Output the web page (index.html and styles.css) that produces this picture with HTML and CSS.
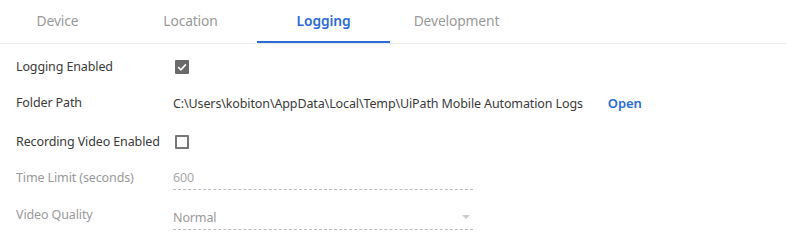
FILE: index.html
```html
<!DOCTYPE html>
<html>
<head>
<meta charset="utf-8">
<link rel="stylesheet" href="styles.css">
</head>
<body>
<div class="tabbar">
  <div class="tabs">
    <div class="tab">Device</div>
    <div class="tab">Location</div>
    <div class="tab active">Logging</div>
    <div class="tab">Development</div>
  </div>
</div>
<div class="form">
  <div class="row r1">
    <div class="label">Logging Enabled</div>
    <div class="value"><span class="cb checked"><svg viewBox="0 0 14 14" width="14" height="14"><path d="M3.2 7.2 L5.9 9.8 L10.9 4.4" fill="none" stroke="#fff" stroke-width="1.6"/></svg></span></div>
  </div>
  <div class="row r2">
    <div class="label">Folder Path</div>
    <div class="value path">C:\Users\kobiton\AppData\Local\Temp\UiPath Mobile Automation Logs <a class="open">Open</a></div>
  </div>
  <div class="row r3">
    <div class="label">Recording Video Enabled</div>
    <div class="value"><span class="cb"></span></div>
  </div>
  <div class="row r4 disabled">
    <div class="label">Time Limit (seconds)</div>
    <div class="value"><div class="field">600</div></div>
  </div>
  <div class="row r5 disabled">
    <div class="label">Video Quality</div>
    <div class="value"><div class="field select">Normal<span class="arrow"></span></div></div>
  </div>
</div>
</body>
</html>
```
FILE: styles.css
```css
html, body { margin: 0; padding: 0; background: #fff; }
body { font-family: "Noto Sans", "Open Sans", sans-serif; font-size: 12.5px; letter-spacing: -0.12px; color: #3a3a3a; width: 786px; height: 247px; overflow: hidden; }
.tabbar { border-bottom: 1px solid #ebebeb; height: 44px; box-sizing: border-box; }
.tabs { display: flex; margin-left: -9px; }
.tab { width: 133px; text-align: center; font-size: 13.8px; color: #999; height: 43px; line-height: 41px; box-sizing: border-box; }
.tab.active { color: #2b6bd4; font-weight: 600; border-bottom: 2px solid #2b6bd4; }
.form { padding-left: 16px; }
.row { display: flex; align-items: center; }
.label { width: 157px; flex: none; line-height: 18px; }
.value { display: flex; align-items: center; }
.r1 { height: 22px; margin-top: 12px; }
.r2 { height: 22px; margin-top: 14px; }
.r3 { height: 22px; margin-top: 17px; }
.r4 { margin-top: 14px; align-items: flex-start; }
.r4 .label { margin-top: 2px; }
.r5 { margin-top: 16px; align-items: flex-start; }
.r5 .value { margin-top: 1px; }
.cb { width: 14px; height: 14px; box-sizing: border-box; border: 2px solid #777; border-radius: 1px; display: inline-flex; margin-left: 2px; }
.cb.checked { background: #6a6a6a; border: none; }
.open { color: #2b6bd4; font-weight: 600; font-size: 13px; margin-left: 25px; }
.disabled .label { color: #999; }
.field { width: 300px; border-bottom: 1px dashed #bbb; color: #aaa; height: 22px; line-height: 22px; display: flex; justify-content: space-between; align-items: center; }
.select { color: #999; }
.arrow { width: 0; height: 0; border-left: 4px solid transparent; border-right: 4px solid transparent; border-top: 4px solid #ccc; margin-right: 3px; margin-top: -3px; }
```
